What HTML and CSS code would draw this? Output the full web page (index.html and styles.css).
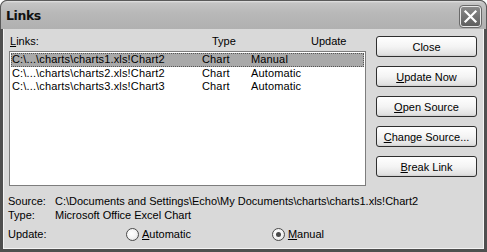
FILE: index.html
```html
<!DOCTYPE html>
<html>
<head>
<meta charset="utf-8">
<link rel="stylesheet" href="styles.css">
</head>
<body>
<div class="window">
  <div class="titlebar">
    <span class="title">Links</span>
    <span class="close-btn">
      <svg width="15" height="15" viewBox="0 0 15 15"><path d="M2.5 2.5 L12.5 12.5 M12.5 2.5 L2.5 12.5" stroke="#fff" stroke-width="2.2" stroke-linecap="square"/></svg>
    </span>
  </div>
  <div class="content">
    <div class="main">
      <div class="left">
        <div class="header">
          <span><u>L</u>inks:</span>
          <span>Type</span>
          <span>Update</span>
        </div>
        <div class="listbox">
          <div class="row selected"><span>C:\...\charts\charts1.xls!Chart2</span><span>Chart</span><span>Manual</span></div>
          <div class="row"><span>C:\...\charts\charts2.xls!Chart2</span><span>Chart</span><span>Automatic</span></div>
          <div class="row"><span>C:\...\charts\charts3.xls!Chart3</span><span>Chart</span><span>Automatic</span></div>
        </div>
      </div>
      <div class="buttons">
        <div class="btn">Close</div>
        <div class="btn"><u>U</u>pdate Now</div>
        <div class="btn"><u>O</u>pen Source</div>
        <div class="btn"><u>C</u>hange Source...</div>
        <div class="btn"><u>B</u>reak Link</div>
      </div>
    </div>
    <div class="info">
      <div class="info-row"><span class="label">Source:</span><span>C:\Documents and Settings\Echo\My Documents\charts\charts1.xls!Chart2</span></div>
      <div class="info-row"><span class="label">Type:</span><span>Microsoft Office Excel Chart</span></div>
      <div class="info-row update-row">
        <span class="label">Update:</span>
        <span class="radio auto"><span class="circle"></span><span><u>A</u>utomatic</span></span>
        <span class="radio manual"><span class="circle checked"></span><span><u>M</u>anual</span></span>
      </div>
    </div>
  </div>
</div>
</body>
</html>
```
FILE: styles.css
```css
* { box-sizing: border-box; }
html, body { margin: 0; padding: 0; background: #fff; }
body {
  font-family: "Liberation Sans", Arial, sans-serif;
  font-size: 11px;
  color: #000;
}
u { text-decoration: underline; text-underline-offset: 1px; }
.window {
  width: 487px;
  height: 252px;
  display: flex;
  flex-direction: column;
  background: #4f4f4f;
  border-radius: 7px 7px 0 0;
  overflow: hidden;
}
.titlebar {
  height: 29px;
  flex: none;
  display: flex;
  align-items: center;
  justify-content: space-between;
  padding: 0 5px 0 5px;
  background: linear-gradient(#e4e4e4 0px, #c4c4c4 2px, #b9b9b9 40%, #b0b0b0 100%);
  border: 1px solid #5a5a5a;
  border-bottom: none;
  border-radius: 7px 7px 0 0;
}
.title {
  font-family: "DejaVu Sans", sans-serif;
  font-weight: bold;
  font-size: 12.5px;
  letter-spacing: -0.4px;
  color: #111;
  margin-top: 1px;
}
.close-btn {
  width: 21px;
  height: 21px;
  border-radius: 3px;
  border: 1px solid #e8e8e8;
  outline: 1px solid #6a6a6a;
  background: linear-gradient(#8a8a8a, #5e5e5e);
  display: flex;
  align-items: center;
  justify-content: center;
  margin-top: 2px;
}
.content {
  flex: 1;
  margin: 0 3px 3px 3px;
  background: #d9d9d9;
  border: 1px solid #f4f4f4;
  border-top: none;
  display: flex;
  flex-direction: column;
  padding: 6px 0 0 0;
}
.main {
  display: flex;
  gap: 10px;
}
.left {
  width: 362px;
  padding-left: 5px;
}
.header {
  display: grid;
  grid-template-columns: 202px 99px 1fr;
  padding-left: 1px;
  height: 15px;
  line-height: 13px;
}
.listbox {
  margin-top: 1px;
  width: 357px;
  height: 135px;
  background: #fff;
  border: 1px solid #7d7d7d;
  padding: 1px 1px;
}
.row {
  display: grid;
  grid-template-columns: 190px 49px 1fr;
  height: 13px;
  line-height: 13px;
  padding-left: 1px;
  white-space: nowrap;
  letter-spacing: 0.15px;
}
.row.selected {
  background: #a9a9a9;
  outline: 1px dotted #555;
  outline-offset: -1px;
  height: 14px;
}
.buttons {
  display: flex;
  flex-direction: column;
  gap: 9px;
  padding-top: 1px;
}
.btn {
  width: 101px;
  height: 21px;
  border: 1px solid #2f2f2f;
  border-radius: 3px;
  background: linear-gradient(#ffffff 0%, #f4f4f4 50%, #e2e2e2 90%, #cfcfcf 100%);
  display: flex;
  align-items: center;
  justify-content: center;
  white-space: nowrap;
}
.info {
  margin-top: 8px;
  padding-left: 4px;
}
.info-row {
  display: flex;
  height: 14px;
  line-height: 14px;
  white-space: nowrap;
}
.info-row .label { width: 47px; flex: none; }
.update-row {
  margin-top: 4px;
  height: 16px;
  align-items: center;
}
.radio {
  display: flex;
  align-items: center;
  gap: 3px;
}
.radio.auto { margin-left: 71px; }
.radio.manual { margin-left: 81px; }
.circle {
  width: 13px;
  height: 13px;
  border-radius: 50%;
  border: 1px solid #4a4a4a;
  background: radial-gradient(circle at 40% 40%, #ffffff 0%, #f4f4f4 50%, #d4d4d4 100%);
  display: flex;
  align-items: center;
  justify-content: center;
}
.circle.checked::after {
  content: "";
  width: 5px;
  height: 5px;
  border-radius: 50%;
  background: #4a4a4a;
}
```
